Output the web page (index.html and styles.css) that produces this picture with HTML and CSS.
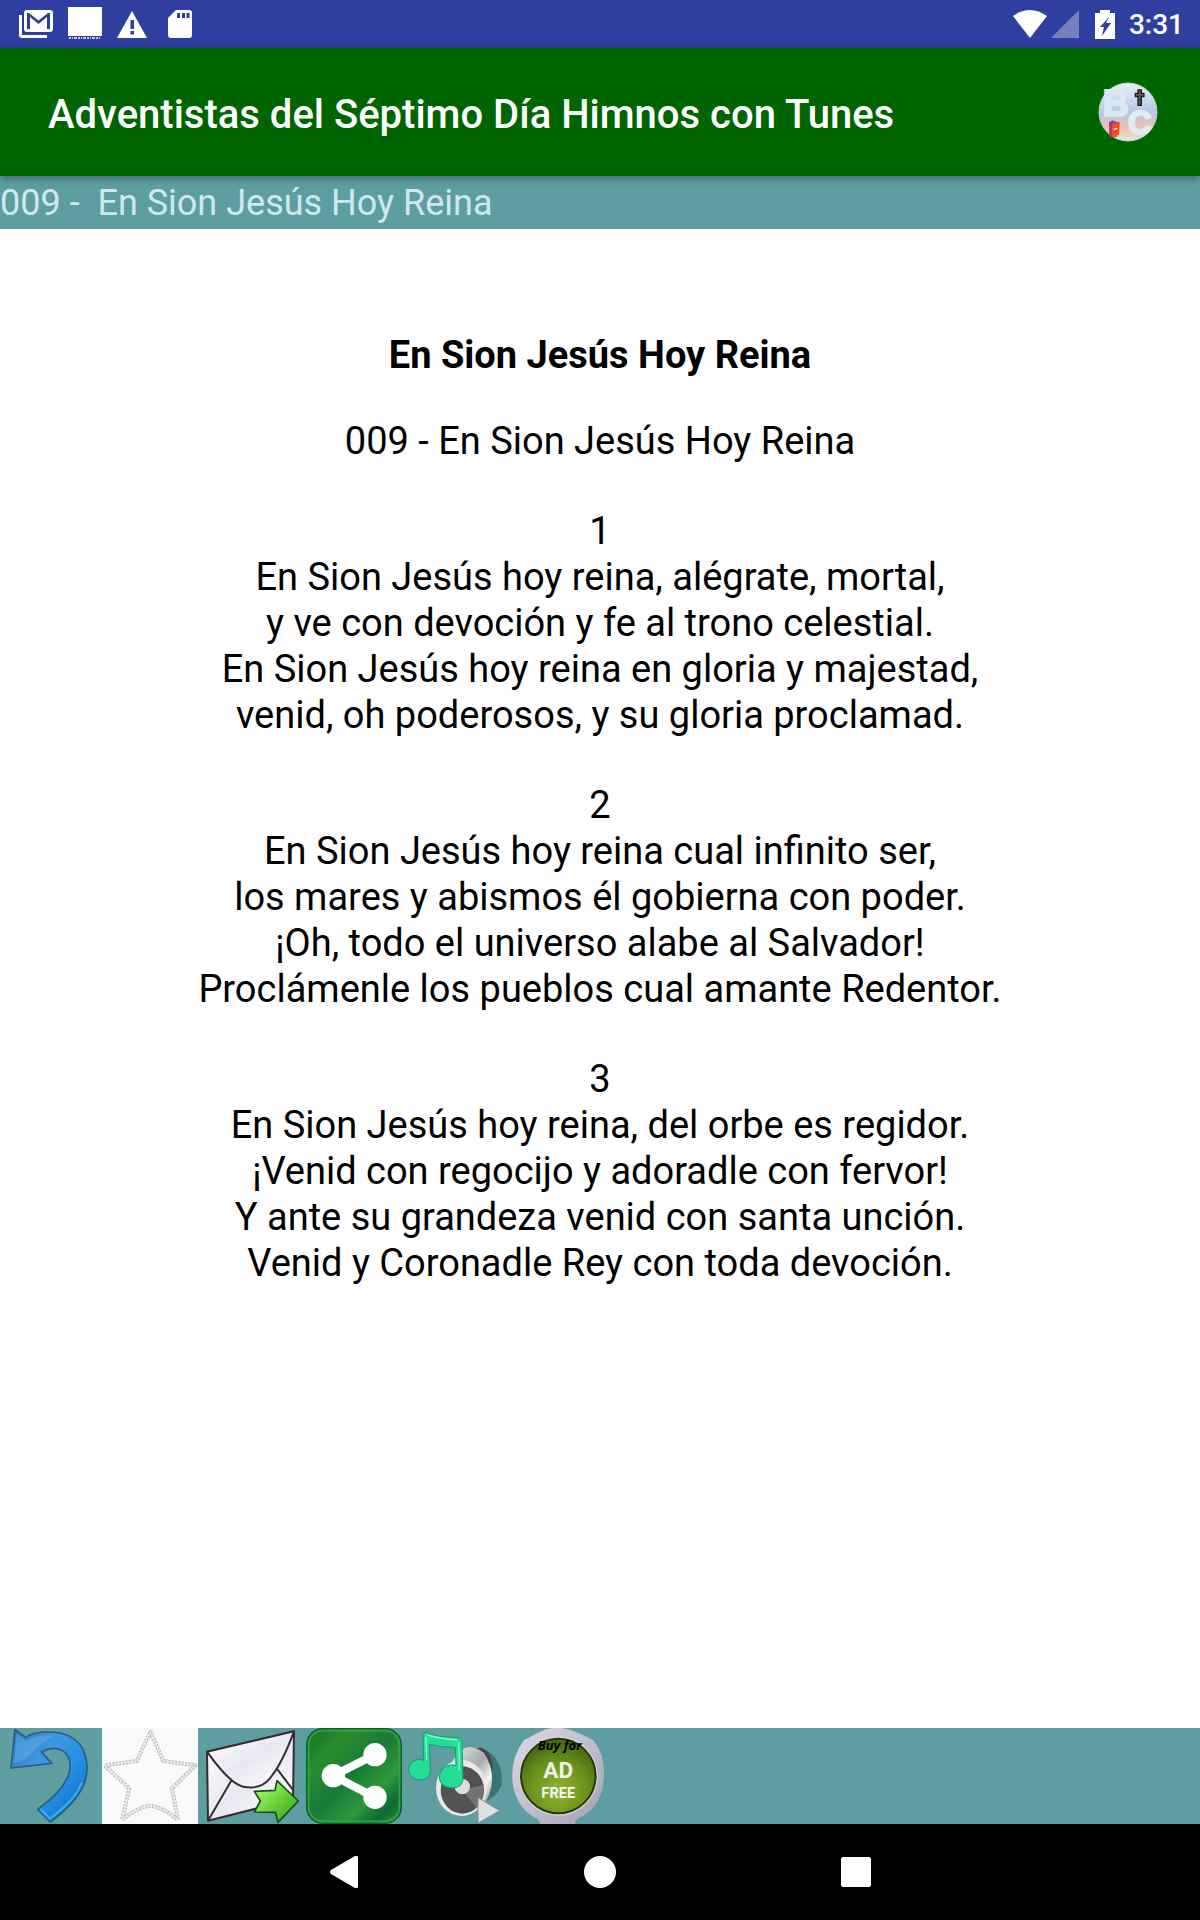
FILE: index.html
```
<!DOCTYPE html>
<html lang="es">
<head>
<meta charset="utf-8">
<meta name="viewport" content="width=device-width, initial-scale=1">
<title>Adventistas del Séptimo Día Himnos con Tunes</title>
<link rel="stylesheet" href="styles.css">
</head>
<body>
<div class="status">
  <div class="status-group notices">
    <svg width="34" height="28" viewBox="0 0 34 28"><path d="M0 5h3v20h25v3H3q-3 0-3-3z" fill="#fff"/><path fill-rule="evenodd" d="M8 0h23q3 0 3 3v16q0 3-3 3H8q-3 0-3-3V3q0-3 3-3zm0 3v16h3V7l8.500 7L28 7v12h3V3h-2l-9.500 7.500L10 3z" fill="#fff"/></svg>
    <svg width="34" height="34" viewBox="0 0 34 34"><path d="M0 0h34v29H0z" fill="#fff"/><path d="M1 31h32" stroke="#c5cae9" stroke-width="2" stroke-dasharray="2 1 1 1 3 1"/></svg>
    <svg width="30" height="27" viewBox="0 0 30 27"><path d="M15 0l15 27H0z" fill="#fff"/><path d="M13.500 9h3.500v9h-3.500zM13.500 20h3.500v3.500h-3.500z" fill="#303f9f"/></svg>
    <svg width="24" height="28" viewBox="0 0 24 28"><path d="M8 0h13q3 0 3 3v22q0 3-3 3H3q-3 0-3-3V8z" fill="#fff"/><path d="M9 3h3v5H9zM14 3h3v5h-3zM18.500 3h3v5h-3z" fill="#303f9f"/></svg>
  </div>
  <div class="status-group system">
    <svg width="34" height="28" viewBox="0 0 34 28"><path d="M0 6Q17-6 34 6L17 28z" fill="#fff"/></svg>
    <svg width="28" height="28" viewBox="0 0 28 28"><path d="M28 0v28H0z" fill="#7780bd"/></svg>
    <svg class="battery" width="20" height="29" viewBox="0 0 20 29"><path d="M5 0h10v3h5v26H0V3h5z" fill="#fff"/><path d="M14 7L5 17h4l-2 9 9-13h-5z" fill="#303f9f"/></svg>
    <time class="clock">3:31</time>
  </div>
</div>
<header class="appbar">
  <h1 class="app-title">Adventistas del Séptimo Día Himnos con Tunes</h1>
  <button class="icon-button" aria-label="BC">
    <svg width="60" height="60" viewBox="54 36 180 180">
      <defs><linearGradient id="sky" x2="0" y2="1"><stop offset="0" stop-color="#e3f2f5"/><stop offset=".5" stop-color="#b9c6e8"/><stop offset=".78" stop-color="#efc0ac"/><stop offset="1" stop-color="#dcebe2"/></linearGradient></defs>
      <circle cx="144" cy="126" r="87" fill="url(#sky)" stroke="#b9dac4" stroke-width="3"/>
      <text x="68" y="137" font-size="108" class="art-text" fill="#dbe8f4" stroke="#dbe8f4">B</text>
      <text x="144" y="193" font-size="98" class="art-text" fill="#dfedf2" stroke="#dfedf2">C</text>
      <path d="M174 60h10v10h8v10h-8v26h-10V80h-8V70h8z" fill="#555" stroke="#202020" stroke-width="4"/>
      <path d="M87 157l10-6 20 7-8 44-20-5z" fill="#6650c8"/><path d="M95 162l24-7-2 40-23 7z" fill="#ff4519"/><path d="M88 157l7 5-1 40-6-6z" fill="#b73264"/><path d="M101 178l11-3" stroke="#fff" stroke-width="4"/>
    </svg>
  </button>
</header>
<div class="hymn-label">009 -  En Sion Jesús Hoy Reina</div>
<main class="hymn">
  <h2 class="hymn-title">En Sion Jesús Hoy Reina</h2>
  <p class="verse">009 - En Sion Jesús Hoy Reina</p>
  <p class="verse">1<br>En Sion Jesús hoy reina, alégrate, mortal,<br>y ve con devoción y fe al trono celestial.<br>En Sion Jesús hoy reina en gloria y majestad,<br>venid, oh poderosos, y su gloria proclamad.</p>
  <p class="verse">2<br>En Sion Jesús hoy reina cual infinito ser,<br>los mares y abismos él gobierna con poder.<br>¡Oh, todo el universo alabe al Salvador!<br>Proclámenle los pueblos cual amante Redentor.</p>
  <p class="verse">3<br>En Sion Jesús hoy reina, del orbe es regidor.<br>¡Venid con regocijo y adoradle con fervor!<br>Y ante su grandeza venid con santa unción.<br>Venid y Coronadle Rey con toda devoción.</p>
</main>
<div class="toolbar">
  <button class="icon-button" aria-label="Volver">
    <svg width="96" height="96" viewBox="0 24 288 288">
      <defs><linearGradient id="blue" x1="0" y1="0" x2="1" y2="1"><stop offset="0" stop-color="#2b78bd"/><stop offset=".35" stop-color="#3f97e0"/><stop offset=".6" stop-color="#2490e6"/><stop offset="1" stop-color="#1464ae"/></linearGradient></defs>
      <path d="M45 29L77 52Q100 36 143 36Q220 36 248 86Q272 140 252 193Q226 251 151 306L113 268Q190 213 207 160Q219 114 188 92Q158 76 124 96L156 130L33 144Z" fill="url(#blue)" stroke="#275f85" stroke-width="5" stroke-linejoin="round"/>
      <path d="M50 40L78 62Q120 40 162 48Q120 66 84 112L43 130Z" fill="#73b5ee" opacity=".4"/><path d="M122 268L150 296Q228 238 245 188" fill="none" stroke="#38b6ff" stroke-width="7" opacity=".8"/>
    </svg>
  </button>
  <button class="icon-button" aria-label="Favorito">
    <svg width="96" height="96" viewBox="306 24 288 288">
      <path d="M306 24h288v288H306z" fill="#fafafa"/>
      <g fill="none" stroke-linejoin="round"><path d="M451 36L490 123L586 136L516 205L534 300Q490 262 451 257Q410 262 366 300L388 205L314 136L410 123Z" stroke="#bdbdbd" stroke-width="12" stroke-dasharray="7 3"/><path d="M451 36L490 123L586 136L516 205L534 300Q490 262 451 257Q410 262 366 300L388 205L314 136L410 123Z" stroke="#f3f3f3" stroke-width="5" stroke-dasharray="5 5"/></g>
    </svg>
  </button>
  <button class="icon-button" aria-label="Enviar por correo">
    <svg width="96" height="96" viewBox="27 24 288 288">
      <defs><linearGradient id="paper" x2="1" y2="1"><stop offset="0" stop-color="#fff"/><stop offset=".5" stop-color="#e8e8f3"/><stop offset="1" stop-color="#fff"/></linearGradient><linearGradient id="lime" x2="1" y2="1"><stop offset="0" stop-color="#b5ff73"/><stop offset="1" stop-color="#27a50b"/></linearGradient></defs>
      <g stroke="#372c32" stroke-width="6" stroke-linejoin="round"><path d="M36 95L297 34L294 238L39 302Z" fill="url(#paper)"/><path d="M39 302L110 180M245 145L294 210" fill="none"/><path d="M36 95Q105 192 145 200Q202 211 230 168Q263 126 297 34Z" fill="url(#paper)"/></g>
      <path d="M178 214L240 211L246 182L310 243L249 307L241 277L178 276L196 243Z" fill="url(#lime)" stroke="#174f18" stroke-width="5" stroke-linejoin="round"/>
    </svg>
  </button>
  <button class="icon-button" aria-label="Compartir">
    <svg width="96" height="96" viewBox="333 24 288 288">
      <defs><linearGradient id="green" x2="1" y2="1"><stop offset="0" stop-color="#147329"/><stop offset=".25" stop-color="#2b8c2e"/><stop offset=".48" stop-color="#187a37"/><stop offset=".7" stop-color="#30983a"/><stop offset=".85" stop-color="#0b6933"/><stop offset="1" stop-color="#329a36"/></linearGradient></defs>
      <rect x="335" y="26" width="284" height="284" rx="48" fill="url(#green)" stroke="#086329" stroke-width="4"/><rect x="341" y="32" width="272" height="272" rx="43" fill="none" stroke="#31a047" stroke-width="5"/>
      <path d="M540 104L415 167L540 232" fill="none" stroke="#fff" stroke-width="24"/><g fill="#fff"><circle cx="540" cy="104" r="35"/><circle cx="415" cy="167" r="35"/><circle cx="540" cy="232" r="35"/></g>
    </svg>
  </button>
  <button class="icon-button" aria-label="Reproducir música">
    <svg width="96" height="96" viewBox="24 24 288 288">
      <defs><linearGradient id="metal" x2="1" y2="1"><stop offset="0" stop-color="#fff"/><stop offset=".5" stop-color="#aaa"/><stop offset=".7" stop-color="#f4f4f4"/><stop offset="1" stop-color="#666"/></linearGradient></defs>
      <path d="M239 82Q306 105 306 184Q300 233 238 250Z" fill="#285d61" opacity=".65"/><ellipse cx="237" cy="143" rx="41" ry="60" fill="#484848"/>
      <path d="M176 95Q212 65 252 99Q292 160 266 228Q240 280 190 288L112 190Z" fill="url(#metal)"/><ellipse cx="184" cy="204" rx="76" ry="84" fill="#e9e9e9"/><ellipse cx="187" cy="210" rx="65" ry="71" fill="#505254"/><path d="M187 210L125 180Q142 149 178 140ZM187 210L249 195Q254 235 230 264Z" fill="#8a8a8a" opacity=".6"/><circle cx="187" cy="200" r="23" fill="#dedede"/>
      <g fill="#24dc96" stroke="#149d77" stroke-width="3"><path d="M69 45Q70 37 80 37Q95 50 173 53Q187 54 186 66L189 177Q187 203 158 204Q123 202 118 176Q117 149 139 138Q154 132 168 136L166 83Q120 81 88 73L91 151Q91 175 67 180Q34 180 26 154Q25 126 50 119Q61 117 71 121Z"/></g><path d="M82 45Q119 56 172 60M78 50L80 120M176 67L178 151" stroke="#82ffc8" stroke-width="4" fill="none"/>
      <path d="M234 233L299 272L234 310Z" fill="#e0e0e0" stroke="#888" stroke-width="3"/>
    </svg>
  </button>
  <button class="icon-button" aria-label="Comprar sin anuncios">
    <svg width="96" height="96" viewBox="330 24 288 288">
      <defs><linearGradient id="rim" x2="1" y2="1"><stop offset="0" stop-color="#ddd9eb"/><stop offset="1" stop-color="#a3a1b2"/></linearGradient><radialGradient id="olive" cy=".7" r=".65"><stop offset="0" stop-color="#8fb52d"/><stop offset=".6" stop-color="#6c921d"/><stop offset="1" stop-color="#4a6c10"/></radialGradient></defs>
      <path d="M338 190Q330 115 372 61Q415 37 438 28Q473 18 509 29Q550 43 580 61Q620 109 610 190Q602 255 548 289Q523 299 525 312H421Q420 299 400 290Q350 262 338 190Z" fill="url(#rim)"/><circle cx="475" cy="168" r="119" fill="#d4d4d4"/><circle cx="475" cy="168" r="115" fill="#233c0c"/><circle cx="475" cy="168" r="109" fill="url(#olive)"/>
      <text x="479" y="91" text-anchor="middle" font-size="39" class="buy-text">Buy for</text>
      <text x="475" y="173" text-anchor="middle" font-size="68" class="badge-text" fill="#eef1e9">AD</text><text x="475" y="233" text-anchor="middle" font-size="44" class="badge-text" fill="#f5f5f5">FREE</text>
    </svg>
  </button>
</div>
<nav class="navbar" aria-label="Sistema">
  <button class="nav-button" aria-label="Atrás"><svg width="28" height="32" viewBox="0 0 28 32"><path d="M25 0Q28-1 28 2v28q0 3-3 2L1 18q-2-2 0-4z" fill="#fff"/></svg></button>
  <button class="nav-button" aria-label="Inicio"><svg width="32" height="32" viewBox="0 0 32 32"><circle cx="16" cy="16" r="16" fill="#fff"/></svg></button>
  <button class="nav-button" aria-label="Recientes"><svg width="30" height="30" viewBox="0 0 30 30"><rect width="30" height="30" rx="2" fill="#fff"/></svg></button>
</nav>
</body>
</html>
```
FILE: styles.css
```
* { box-sizing: border-box; }
body {
  margin: 0;
  min-height: 100vh;
  display: flex;
  flex-direction: column;
  background: #fff;
  color: #000;
  font-family: Roboto, "Liberation Sans", sans-serif;
}
h1, h2, p { margin: 0; }
svg { display: block; flex: none; }
button { padding: 0; border: 0; background: none; cursor: pointer; }

.status {
  display: flex;
  justify-content: space-between;
  height: 48px;
  padding: 0 16px 0 19px;
  background: #303f9f;
  color: #fff;
}
.status-group { display: flex; align-items: center; }
.notices { gap: 15px; }
.notices svg:last-child { margin-left: 6px; }
.system { gap: 4px; }
.battery { margin: 0 10px 0 12px; }
.clock { padding-top: 2px; font-size: 28px; font-weight: 500; line-height: 32px; }

.appbar {
  position: relative;
  display: flex;
  align-items: center;
  justify-content: space-between;
  height: 128px;
  padding: 0 42px 0 48px;
  background: #006400;
  color: #fff;
  box-shadow: 0 2px 8px rgba(0, 0, 0, 0.4);
}
.app-title { padding-top: 5px; font-size: 40px; font-weight: 500; line-height: 48px; }

.hymn-label {
  height: 53px;
  padding-top: 6px;
  background: #5f9ea0;
  color: #cfe8ee;
  font-size: 36px;
  line-height: 42px;
  white-space: pre;
}

.hymn {
  flex: 1;
  padding: 103px 16px 44px;
  text-align: center;
  font-size: 38px;
  line-height: 46px;
}
.hymn-title { margin-bottom: 40px; font-size: 38px; font-weight: 700; }
.verse + .verse { margin-top: 44px; }

.toolbar { display: flex; gap: 6px; background: #5f9ea0; }
.art-text { font-family: "Liberation Sans", sans-serif; font-weight: 700; stroke-width: 6px; }
.buy-text { font-family: "Open Sans", sans-serif; font-weight: 700; font-style: italic; }
.badge-text { font-family: Roboto, sans-serif; font-weight: 700; }

.navbar {
  display: flex;
  justify-content: center;
  height: 96px;
  background: #000;
}
.nav-button {
  display: flex;
  align-items: center;
  justify-content: center;
  width: 256px;
}
```
